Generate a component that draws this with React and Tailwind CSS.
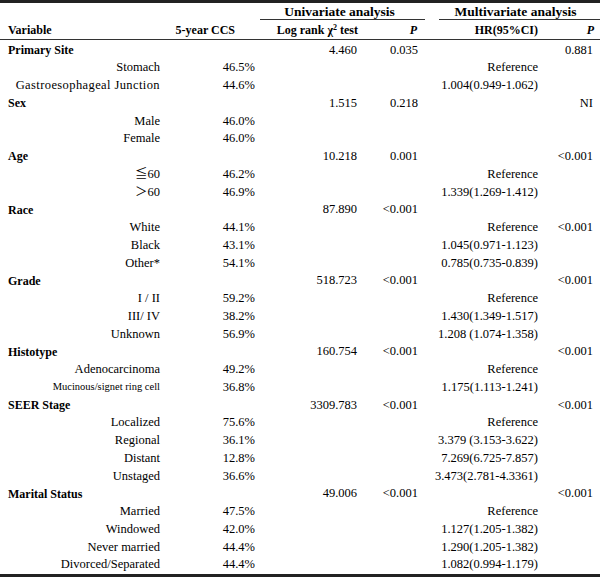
import React from "react";

const ROWS = [
  { label: "Primary Site", group: true, chi: "4.460", p1: "0.035", p2: "0.881" },
  { label: "Stomach", ccs: "46.5%", hr: "Reference" },
  { label: "Gastroesophageal Junction", ccs: "44.6%", hr: "1.004(0.949-1.062)", wide: true },
  { label: "Sex", group: true, chi: "1.515", p1: "0.218", p2: "NI" },
  { label: "Male", ccs: "46.0%" },
  { label: "Female", ccs: "46.0%" },
  { label: "Age", group: true, chi: "10.218", p1: "0.001", p2: "<0.001" },
  { label: "≦60", ccs: "46.2%", hr: "Reference" },
  { label: "＞60", ccs: "46.9%", hr: "1.339(1.269-1.412)" },
  { label: "Race", group: true, chi: "87.890", p1: "<0.001" },
  { label: "White", ccs: "44.1%", hr: "Reference", p2: "<0.001" },
  { label: "Black", ccs: "43.1%", hr: "1.045(0.971-1.123)" },
  { label: "Other*", ccs: "54.1%", hr: "0.785(0.735-0.839)" },
  { label: "Grade", group: true, chi: "518.723", p1: "<0.001", p2: "<0.001" },
  { label: "I / II", ccs: "59.2%", hr: "Reference" },
  { label: "III/ IV", ccs: "38.2%", hr: "1.430(1.349-1.517)" },
  { label: "Unknown", ccs: "56.9%", hr: "1.208 (1.074-1.358)" },
  { label: "Histotype", group: true, chi: "160.754", p1: "<0.001", p2: "<0.001" },
  { label: "Adenocarcinoma", ccs: "49.2%", hr: "Reference" },
  { label: "Mucinous/signet ring cell", ccs: "36.8%", hr: "1.175(1.113-1.241)", small: true },
  { label: "SEER Stage", group: true, chi: "3309.783", p1: "<0.001", p2: "<0.001" },
  { label: "Localized", ccs: "75.6%", hr: "Reference" },
  { label: "Regional", ccs: "36.1%", hr: "3.379 (3.153-3.622)" },
  { label: "Distant", ccs: "12.8%", hr: "7.269(6.725-7.857)" },
  { label: "Unstaged", ccs: "36.6%", hr: "3.473(2.781-4.3361)" },
  { label: "Marital Status", group: true, chi: "49.006", p1: "<0.001", p2: "<0.001" },
  { label: "Married", ccs: "47.5%", hr: "Reference" },
  { label: "Windowed", ccs: "42.0%", hr: "1.127(1.205-1.382)" },
  { label: "Never married", ccs: "44.4%", hr: "1.290(1.205-1.382)" },
  { label: "Divorced/Separated", ccs: "44.4%", hr: "1.082(0.994-1.179)" },
];

const COLS = "grid grid-cols-[165px_93px_102px_61px_120px_59px]";

const App = () => {
  return (
    <div
      className="w-[600px] h-[579px] bg-white text-black text-[12.5px] leading-none whitespace-nowrap"
      style={{ fontFamily: '"Liberation Serif", "Noto Sans CJK SC", serif' }}
    >
      <div className="border-t-[3px] border-[#222]" />

      {/* Header row 1 */}
      <div className={`${COLS} h-[17px] font-bold text-[13.5px]`}>
        <div className="col-span-2" />
        <div className="col-span-2 flex items-center justify-center ml-[2px] mr-[-4px] border-b border-[#333] pr-[6px] pt-[2px]">
          Univariate analysis
        </div>
        <div className="col-span-2 flex items-center justify-center ml-[18px] border-b border-[#333] pr-[8px] pt-[2px]">
          Multivariate analysis
        </div>
      </div>

      {/* Header row 2 */}
      <div className={`${COLS} h-[20px] font-bold text-[12px] border-b-[1.5px] border-[#333]`}>
        <div className="flex items-center pl-[8px]">Variable</div>
        <div className="flex items-center justify-end pr-[23px]">5-year CCS</div>
        <div className="flex items-center justify-end pr-[2px]">
          <span>
            Log rank χ<sup className="text-[8px]">2</sup> test
          </span>
        </div>
        <div className="flex items-center justify-end pr-[4px] italic">P</div>
        <div className="flex items-center justify-end pr-[3px]">HR(95%CI)</div>
        <div className="flex items-center justify-end pr-[6px] italic">P</div>
      </div>

      {/* Body */}
      <div className="pt-[1px]">
        {ROWS.map((row, i) => (
          <div key={i} className={`${COLS} h-[17.75px]`}>
            {row.group ? (
              <div className="flex items-center pl-[8px] font-bold text-[12px]">{row.label}</div>
            ) : (
              <div
                className={`flex items-center justify-end pr-[5px] ${
                  row.small ? "text-[10.5px]" : ""
                } ${row.wide ? "tracking-[0.4px]" : ""}`}
              >
                {row.label}
              </div>
            )}
            <div className="flex items-center justify-end pr-[3px]">{row.ccs}</div>
            <div className="flex items-center justify-end pr-[3px]">{row.chi}</div>
            <div className="flex items-center justify-end pr-[3px]">{row.p1}</div>
            <div className="flex items-center justify-end pr-[3px]">{row.hr}</div>
            <div className="flex items-center justify-end pr-[7px]">{row.p2}</div>
          </div>
        ))}
      </div>

      <div className="border-t-[3px] border-[#222]" />
    </div>
  );
};

export default App;
